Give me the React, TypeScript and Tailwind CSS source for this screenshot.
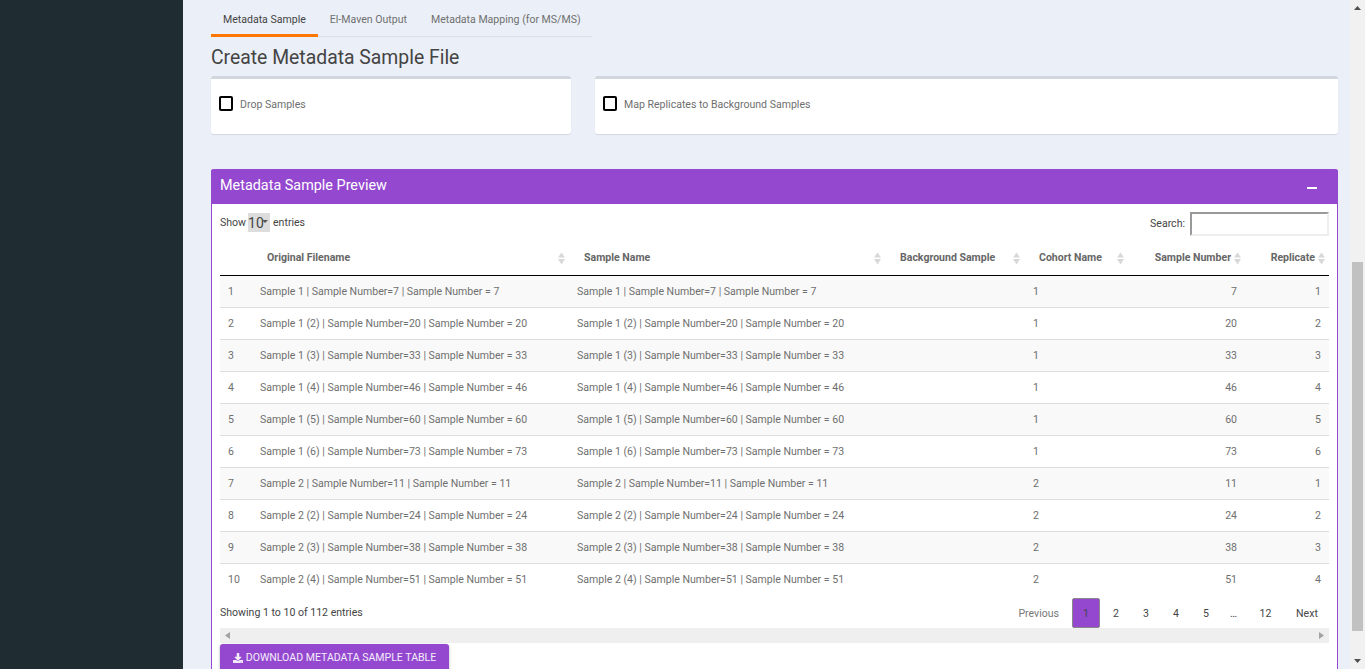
import { FaDownload } from "react-icons/fa";

const rows = [
  ["Sample 1", 7, "1", 1],
  ["Sample 1 (2)", 20, "1", 2],
  ["Sample 1 (3)", 33, "1", 3],
  ["Sample 1 (4)", 46, "1", 4],
  ["Sample 1 (5)", 60, "1", 5],
  ["Sample 1 (6)", 73, "1", 6],
  ["Sample 2", 11, "2", 1],
  ["Sample 2 (2)", 24, "2", 2],
  ["Sample 2 (3)", 38, "2", 3],
  ["Sample 2 (4)", 51, "2", 4],
] as const;

function SortIcon() {
  return (
    <svg width="7" height="13" viewBox="0 0 7 13" className="absolute top-[12px] right-[4px] text-[#d8d8d8]" fill="currentColor">
      <path d="M3.5 0.5 L7 5.5 L0 5.5 Z" />
      <path d="M3.5 12.5 L7 7 L0 7 Z" />
    </svg>
  );
}

function Th({ label, right }: { label: string; right?: boolean }) {
  return (
    <th className={`relative border-b border-black font-bold ${right ? "pr-[14px] text-right" : "pl-[15px] text-left"}`}>
      {label}
      <SortIcon />
    </th>
  );
}

function Card({ label, className }: { label: string; className: string }) {
  return (
    <div className={`flex h-[58px] items-center rounded-[3px] border-t-[3px] border-[#d2d6de] bg-white pb-[6px] pl-2 shadow-[0_1px_1px_rgba(0,0,0,0.1)] ${className}`}>
      <input type="checkbox" className="h-[15px] w-[14px] appearance-none rounded-[2px] border-2 border-black bg-white" />
      <span className="mt-[2px] ml-[7px] text-[10.56px] text-[#6f6f6f]">{label}</span>
    </div>
  );
}

export default function App() {
  return (
    <div className="flex h-[669px] overflow-hidden bg-[#ebeff7] font-['Roboto',sans-serif] text-[10.56px] text-[#555]">
      <aside className="w-[183px] shrink-0 bg-[#1f2d33]" />

      <main className="min-w-0 flex-1 pr-[12px] pl-[28px]">
        <nav className="flex h-[37px] w-[381px] border-b border-[#dcdfe4] whitespace-nowrap">
          <a className="h-[37px] w-[107px] border-b-[3px] border-[#ff7700] px-3 pt-[12px] text-[#444]">Metadata Sample</a>
          <a className="px-3 pt-[12px] text-[#6f6f6f]">El-Maven Output</a>
          <a className="px-3 pt-[12px] text-[#6f6f6f]">Metadata Mapping (for MS/MS)</a>
        </nav>

        <h2 className="mt-[9px] h-[30px] text-[19.36px] leading-[24px] text-[#444]">Create Metadata Sample File</h2>

        <div className="flex gap-[24px]">
          <Card label="Drop Samples" className="w-[360px]" />
          <Card label="Map Replicates to Background Samples" className="flex-1" />
        </div>

        <section className="mt-[35px] rounded-[3px] border-x border-[#9448d0] bg-white">
          <header className="-mx-px flex h-[35px] items-center justify-between rounded-t-[3px] bg-[#9448d0] pr-[21px] pb-[2px] pl-[9px] text-white">
            <h3 className="text-[14.4px]">Metadata Sample Preview</h3>
            <span className="mt-[4px] h-[2px] w-[10px] bg-white" />
          </header>

          <div className="px-[8px]">
            <div className="flex h-[36px] items-start justify-between pt-2 text-[#444]">
              <label className="flex h-[20px] items-center pt-[2px]">
                Show
                <span className="relative mr-[3px] ml-[2px] -mt-[2px]">
                  <select className="block h-[19px] w-[22px] appearance-none bg-[#ddd] pb-[2px] text-[14px] outline-none">
                    <option>10</option>
                  </select>
                  <svg width="6" height="3" viewBox="0 0 6 3" fill="#555" className="absolute top-[7px] right-[2px]">
                    <path d="M0 0 L6 0 L3 3 Z" />
                  </svg>
                </span>
                entries
              </label>
              <label className="flex items-center">
                Search:
                <input className="ml-[5px] h-[24px] w-[139px] border-2 border-t-[#999] border-r-[#eee] border-b-[#eee] border-l-[#999] bg-white" />
              </label>
            </div>

            <table className="w-[1109px] table-fixed border-separate border-spacing-0">
              <colgroup>
                <col className="w-[32px]" />
                <col className="w-[317px]" />
                <col className="w-[316px]" />
                <col className="w-[139px]" />
                <col className="w-[104px]" />
                <col className="w-[117px]" />
                <col className="w-[84px]" />
              </colgroup>
              <thead>
                <tr className="h-[36px] text-[#666]">
                  <th className="border-b border-black" />
                  <Th label="Original Filename" />
                  <Th label="Sample Name" />
                  <Th label="Background Sample" />
                  <Th label="Cohort Name" />
                  <Th label="Sample Number" right />
                  <Th label="Replicate" right />
                </tr>
              </thead>
              <tbody className="text-[#6f6f6f]">
                {rows.map(([name, num, cohort, rep], i) => {
                  const filename = `${name} | Sample Number=${num} | Sample Number = ${num}`;
                  const line = i === rows.length - 1 ? "" : "border-b border-[#ddd]";
                  return (
                    <tr key={i} className={`h-[32px] ${i % 2 === 0 ? "bg-[#f9f9f9]" : "bg-white"}`}>
                      <td className={`pl-2 ${line}`}>{i + 1}</td>
                      <td className={`pl-2 ${line}`}>{filename}</td>
                      <td className={`pl-2 ${line}`}>{filename}</td>
                      <td className={line} />
                      <td className={`pl-[9px] ${line}`}>{cohort}</td>
                      <td className={`pr-2 text-right ${line}`}>{num}</td>
                      <td className={`pr-2 text-right ${line}`}>{rep}</td>
                    </tr>
                  );
                })}
              </tbody>
            </table>

            <div className="flex h-[32px] items-center justify-between pt-[2px] text-[#444]">
              <span>Showing 1 to 10 of 112 entries</span>
              <div className="flex h-[30px] items-center self-end">
                <a className="mt-[2px] mr-px px-3 text-[#777]">Previous</a>
                <a className="flex h-[30px] w-[28px] items-center justify-center rounded-[2px] border border-[#888] bg-[#9448d0] pt-[1px]">1</a>
                <a className="mt-[2px] ml-px w-[30px] text-center">2</a>
                <a className="mt-[2px] w-[30px] text-center">3</a>
                <a className="mt-[2px] w-[30px] text-center">4</a>
                <a className="mt-[2px] w-[30px] text-center">5</a>
                <a className="mt-[2px] w-[25px] text-center">…</a>
                <a className="mt-[2px] w-[39px] text-center">12</a>
                <a className="mt-[2px] w-[44px] text-center">Next</a>
              </div>
            </div>

            <div className="flex h-[15px] items-center justify-between bg-[#efefef] px-[5px]">
              <svg width="5" height="7" viewBox="0 0 5 7" fill="#a3a3a3"><path d="M5 0 L0 3.5 L5 7 Z" /></svg>
              <svg width="5" height="7" viewBox="0 0 5 7" fill="#a3a3a3"><path d="M0 0 L5 3.5 L0 7 Z" /></svg>
            </div>

            <button className="mt-px flex h-[30px] w-[229px] items-center justify-center gap-[3px] rounded-[3px] bg-[#9448d0] pb-[2px] text-white/90 shadow-[0_1px_3px_rgba(0,0,0,0.3)]">
              <FaDownload className="size-[10px]" />
              DOWNLOAD METADATA SAMPLE TABLE
            </button>
          </div>
        </section>
      </main>

      <div className="flex w-[15px] shrink-0 flex-col items-center bg-[#f1f1f1]">
        <svg width="7" height="4" viewBox="0 0 7 4" fill="#505050" className="mt-[6px]"><path d="M0 4 L7 4 L3.5 0 Z" /></svg>
        <div className="mt-[252px] h-[369px] w-[11px] bg-[#c1c1c1]" />
        <svg width="7" height="4" viewBox="0 0 7 4" fill="#505050" className="mt-[28px]"><path d="M0 0 L7 0 L3.5 4 Z" /></svg>
      </div>
    </div>
  );
}
